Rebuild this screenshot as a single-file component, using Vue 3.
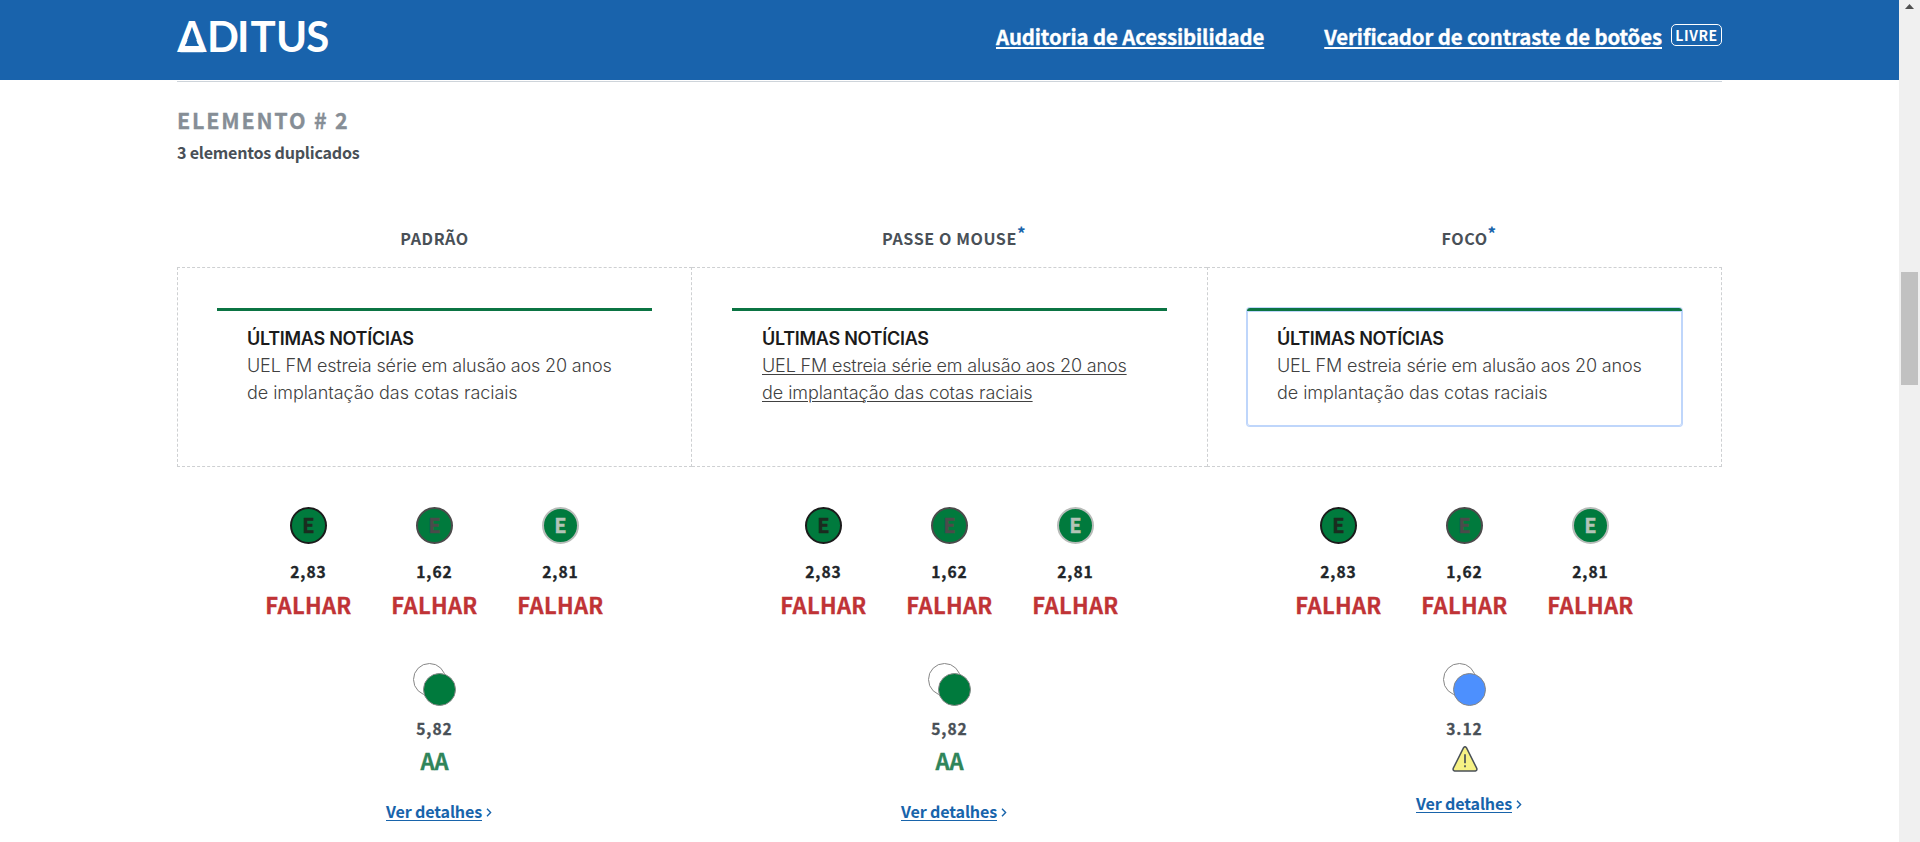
<script setup>
const circles = [
  { value: '2,83', kind: 'dark' },
  { value: '1,62', kind: 'mid' },
  { value: '2,81', kind: 'light' },
]
const states = [
  { name: 'PADRÃO', note: false, value: '5,82', warn: false, kind: 'default' },
  { name: 'PASSE O MOUSE', note: true, value: '5,82', warn: false, kind: 'hover' },
  { name: 'FOCO', note: true, value: '3.12', warn: true, kind: 'focus' },
]
</script>

<template>
  <div class="window">
    <div class="page">
      <header class="topbar">
        <svg class="logo" width="156" height="44" viewBox="0 0 156 44" aria-label="ADITUS">
          <text x="0.3 30 60 73.4 99 129.2" y="32.3">ADITUS</text>
          <path class="cut" d="M14.9 8 L21.5 26 H8.3 Z" />
          <path class="bar" d="M6 26 H24 L26.5 32.2 H3.3 Z" />
        </svg>
        <nav class="nav">
          <a class="nav-audit">Auditoria de Acessibilidade</a>
          <a class="nav-check">Verificador de contraste de botões</a>
          <span class="tag">LIVRE</span>
        </nav>
      </header>

      <main class="main">
        <h2>ELEMENTO # 2</h2>
        <p class="dup">3 elementos duplicados</p>

        <div class="grid heads">
          <h3 v-for="s in states" :key="s.name"><span>{{ s.name }}<sup v-if="s.note">*</sup></span></h3>
        </div>

        <div class="grid preview">
          <div v-for="s in states" :key="s.name" class="cell" :class="s.kind">
            <div class="card">
              <strong>ÚLTIMAS NOTÍCIAS</strong>
              <p><span class="first">UEL FM estreia série em alusão aos 20 anos</span><br /><span class="second">de implantação das cotas raciais</span></p>
            </div>
          </div>
        </div>

        <div class="grid">
          <section v-for="s in states" :key="s.name" class="results">
            <div class="row">
              <div v-for="c in circles" :key="c.kind" class="item">
                <div class="dot" :class="c.kind">E</div>
                <div class="num strong">{{ c.value }}</div>
                <div class="fail">FALHAR</div>
              </div>
            </div>
            <div class="pair">
              <svg width="43" height="43" viewBox="0 0 43 43">
                <circle cx="16.5" cy="16.5" r="16" fill="#fff" stroke="#868686" />
                <circle cx="26.5" cy="26.5" r="16" :fill="s.warn ? '#4d90fe' : '#007a3d'" stroke="#868686" />
              </svg>
            </div>
            <div class="num">{{ s.value }}</div>
            <svg v-if="s.warn" class="warning" width="26" height="26" viewBox="0 0 26 26">
              <path d="M11.6 1.7 Q13 -0.2 14.4 1.7 L24.8 22.4 Q25.3 24.7 23.4 25 H2.6 Q0.7 24.7 1.2 22.4 Z" fill="#f6f184" stroke="#495057" stroke-width="1.5" stroke-linejoin="round" />
              <path d="M13 8.3 V17.2 M13 19.3 V21.3" stroke="#495057" stroke-width="1.7" />
            </svg>
            <div v-else class="pass">AA</div>
            <div class="details">
              <a>Ver detalhes</a>
              <svg width="6" height="9" viewBox="0 0 6 9"><path d="M1 0.8 L4.6 4.5 L1 8.2" fill="none" stroke="#1864ab" stroke-width="1.4" /></svg>
            </div>
          </section>
        </div>
      </main>
    </div>

    <div class="scrollbar">
      <svg width="9" height="5" viewBox="0 0 9 5"><path d="M0 5 L4.5 0 L9 5 Z" fill="#505050" /></svg>
      <div class="thumb"></div>
    </div>
  </div>
</template>

<style>
body {
  margin: 0;
  overflow: hidden;
}
</style>

<style scoped>
.window {
  display: flex;
  width: 1920px;
  height: 842px;
  overflow: hidden;
  background: #fff;
  font-family: "Noto Sans CJK SC", "Open Sans", sans-serif;
  font-weight: 700;
  color: #495057;
}
.page {
  width: 1899px;
}
h2, h3, p {
  margin: 0;
}
.topbar {
  box-sizing: border-box;
  height: 80px;
  padding: 0 177px;
  display: flex;
  justify-content: space-between;
  align-items: flex-start;
  background: #1963ac;
  color: #fff;
}
.logo {
  margin-top: 20px;
  overflow: visible;
}
.logo text {
  font: 700 42px Lato, sans-serif;
  fill: #fff;
}
.logo .cut {
  fill: #1963ac;
}
.logo .bar {
  fill: #fff;
}
.nav {
  display: flex;
  margin-top: 20px;
  font-size: 20.4px;
  line-height: 32px;
}
.nav a {
  white-space: nowrap;
  letter-spacing: -0.11px;
  -webkit-text-stroke: 0.3px #fff;
  text-decoration: underline;
  text-decoration-thickness: 2px;
  text-underline-offset: 2px;
}
.nav-audit {
  margin-right: 60px;
}
.tag {
  box-sizing: border-box;
  width: 51px;
  height: 22px;
  margin: 4px 0 0 9px;
  border: 1px solid #fff;
  border-radius: 5px;
  text-align: center;
  font-size: 14px;
  line-height: 20px;
  letter-spacing: 0.6px;
}
.main {
  width: 1545px;
  margin: 1px 0 0 177px;
  border-top: 1px solid #ced4da;
}
h2 {
  margin-top: 22px;
  font-size: 21.5px;
  line-height: 32px;
  letter-spacing: 1.8px;
  color: #868e96;
  -webkit-text-stroke: 0.3px #868e96;
}
.dup {
  margin-top: 4px;
  font-size: 16.1px;
  line-height: 24px;
  letter-spacing: -0.22px;
}
.grid {
  display: grid;
  grid-template-columns: repeat(3, 515px);
}
.heads {
  margin: 62px 0 17px;
}
h3 {
  text-align: center;
  font-size: 16.1px;
  line-height: 24px;
  letter-spacing: 0.57px;
}
h3 span {
  position: relative;
}
h3 sup {
  position: absolute;
  left: 100%;
  top: -5px;
  font-size: 17px;
  line-height: 24px;
  letter-spacing: 0;
  color: #1864ab;
}
.preview {
  box-sizing: border-box;
  height: 200px;
}
.cell {
  box-sizing: border-box;
  border: 1px dashed #ced0d2;
  padding: 40px 39px;
}
.cell.hover {
  border-left: 0;
  border-right: 0;
  padding: 40px;
}
.card {
  box-sizing: border-box;
  height: 118px;
  padding: 14px 30px;
  border-top: 3px solid #0b7443;
  font: 300 18px/27px Inter, sans-serif;
  color: #414141;
}
.card strong {
  display: block;
  font-weight: 600;
  letter-spacing: -0.27px;
  color: #1b1b1b;
}
.card p {
  white-space: nowrap;
}
.first {
  letter-spacing: -0.16px;
}
.second {
  letter-spacing: -0.06px;
}
.hover p span {
  text-decoration: underline;
  text-decoration-thickness: 1px;
  text-underline-offset: 2px;
}
.focus .card {
  border-radius: 3px;
  box-shadow: 0 0 0 1px #bfd6fb, inset 0 0 0 1px #bfd6fb;
}
.results {
  display: flex;
  flex-direction: column;
  align-items: center;
  padding-top: 40px;
}
.row {
  display: flex;
}
.item {
  width: 126px;
  display: flex;
  flex-direction: column;
  align-items: center;
}
.dot {
  box-sizing: border-box;
  width: 37px;
  height: 37px;
  margin-bottom: 15px;
  border: 2px solid #1b1b1b;
  border-radius: 50%;
  background: #007a3d;
  color: #1b2b1f;
  text-align: center;
  font-size: 20px;
  line-height: 32px;
  -webkit-text-stroke: 0.4px;
}
.dot.mid {
  border-color: #4b4b4b;
  color: #4b4b4b;
}
.dot.light {
  border-color: #b8bcb9;
  color: #b3c4b8;
}
.num {
  font-size: 15.6px;
  line-height: 24px;
  letter-spacing: 1px;
  -webkit-text-stroke: 0.3px;
}
.strong {
  color: #212529;
}
.fail {
  margin-top: 5px;
  font-size: 22px;
  line-height: 32px;
  letter-spacing: 0.3px;
  color: #c03336;
  -webkit-text-stroke: 0.3px;
}
.pair {
  height: 43px;
  margin: 43px 0 10px;
}
.pass {
  margin-top: 4px;
  font-size: 22px;
  line-height: 32px;
  color: #2f855a;
  -webkit-text-stroke: 0.3px;
}
.warning {
  display: block;
  margin-top: 6px;
  margin-bottom: -4px;
}
.details {
  display: flex;
  align-items: center;
  gap: 4px;
  margin: 23px 0 0 9px;
  font-size: 16.1px;
  line-height: 24px;
  color: #1864ab;
}
.details a {
  letter-spacing: -0.15px;
  text-decoration: underline;
  text-decoration-thickness: 1px;
  text-underline-offset: 2px;
}
.details svg {
  margin-top: 2px;
}
.scrollbar {
  width: 21px;
  background: #f0f0f0;
  display: flex;
  flex-direction: column;
}
.scrollbar svg {
  margin: 4px 0 0 6px;
}
.thumb {
  width: 17px;
  height: 113px;
  margin: 263px 0 0 2px;
  background: #c1c1c1;
}
</style>
